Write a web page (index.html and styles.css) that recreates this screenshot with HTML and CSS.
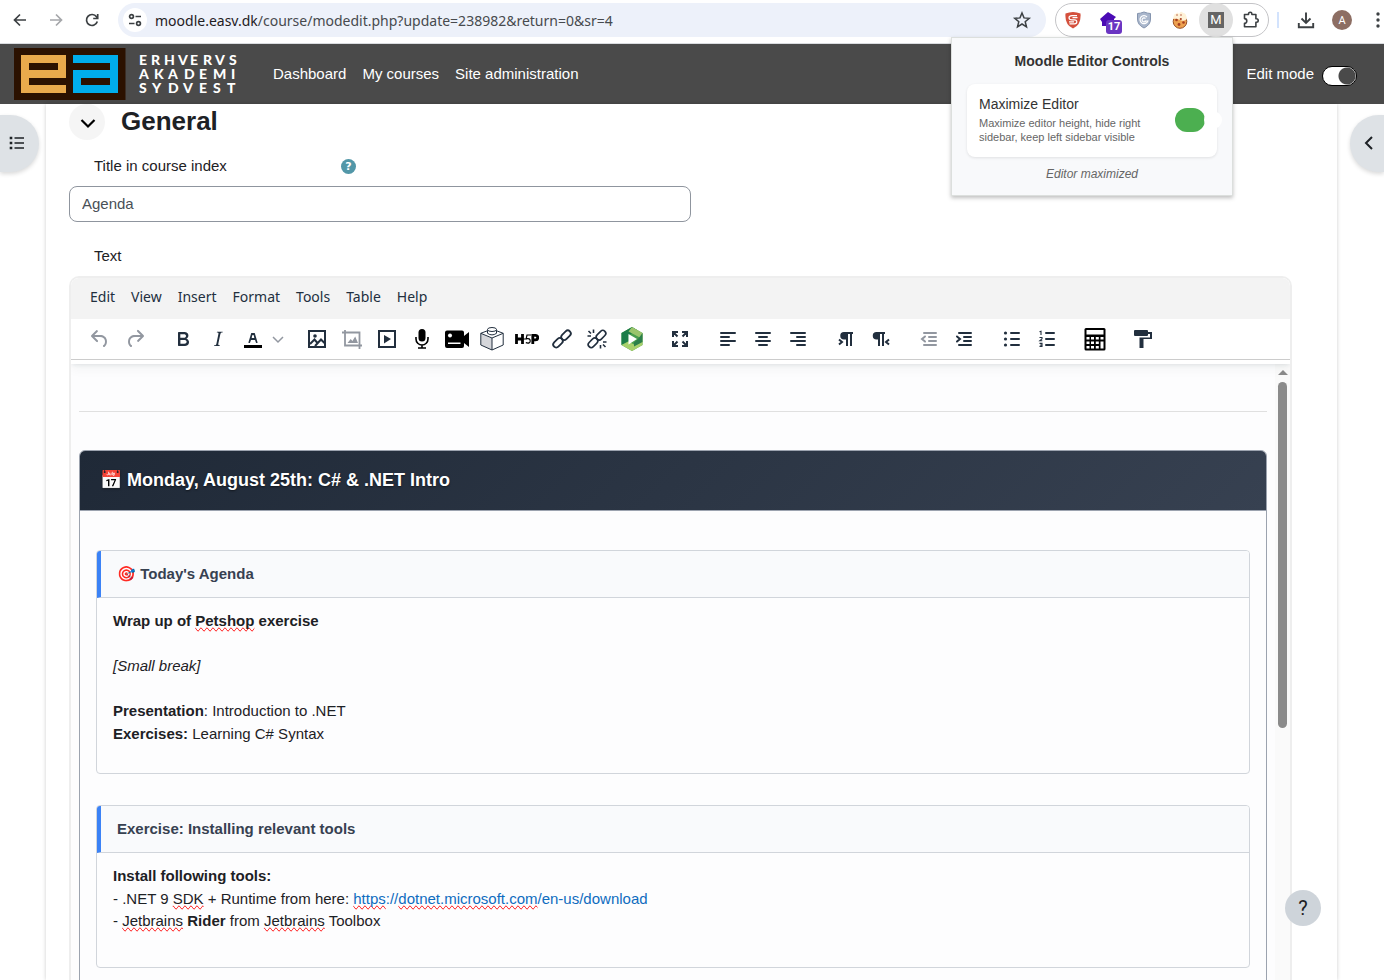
FILE: index.html
```
<!DOCTYPE html>
<html lang="en">
<head>
<meta charset="utf-8">
<title>Edit Text and media area</title>
<link rel="stylesheet" href="styles.css">
</head>
<body>
<header class="browser">
  <button class="tool" aria-label="Back"><svg width="20" height="20" viewBox="0 0 20 20" class="line"><path d="M16 10H4.500M10 4.500 4.500 10 10 15.500"/></svg></button>
  <button class="tool muted" aria-label="Forward"><svg width="20" height="20" viewBox="0 0 20 20" class="line"><path d="M4 10h11.500M10 4.500 15.500 10 10 15.500"/></svg></button>
  <button class="tool" aria-label="Reload"><svg width="20" height="20" viewBox="0 0 20 20" class="line"><path d="M15.300 11.500A5.500 5.500 0 1 1 14.500 6.800L15.500 8M15.700 4v4.500h-4.500"/></svg></button>
  <div class="address">
    <button class="site-info" aria-label="Site information"><svg width="16" height="16" viewBox="0 0 16 16" class="line"><circle cx="4.500" cy="4.500" r="1.900"/><path d="M8.500 4.500H14M2 11.500h5.500"/><circle cx="11.500" cy="11.500" r="1.900"/></svg></button>
    <span class="url"><span class="host">moodle.easv.dk</span>/course/modedit.php?update=238982&amp;return=0&amp;sr=4</span>
    <button class="tool star" aria-label="Bookmark"><svg width="20" height="20" viewBox="0 0 20 20"><path d="m10 3 2 4.900 5.200.4-4 3.400 1.300 5.100-4.500-2.800-4.500 2.800 1.300-5.100-4-3.400 5.200-.4z" fill="none" stroke="currentColor" stroke-width="1.500"/></svg></button>
  </div>
  <div class="extensions">
    <button class="ext" aria-label="Shield S"><svg width="18" height="18" viewBox="0 0 18 18"><path d="M1.500 2.500Q9-.5 16.500 2.500 17.500 14 9 17.500.500 14 1.500 2.500Z" fill="#d4503c"/><path d="M13 4.600H8Q5 4.600 5 6.700T8 8.800h2.500q2.300 0 2.300 2t-2.300 2H5.500M13.500 6.700H8.500M5 10.800h5" fill="none" stroke="#fff" stroke-width="1.200"/></svg></button>
    <button class="ext" aria-label="Purple extension"><svg width="24" height="24" viewBox="0 0 24 24"><path d="m12 4 8 5-2 2v7H6v-4l-2-3z" fill="#4b0bb5"/></svg><span class="count">17</span></button>
    <button class="ext" aria-label="Privacy shield"><svg width="18" height="18" viewBox="0 0 18 18"><path d="M9 1q4 1.500 6.500 1.500V8q0 6-6.500 9Q2.500 14 2.500 8V2.500Q5 2.500 9 1Z" fill="#a9b6cb" stroke="#8494ae"/><path d="M12 6a4 4 0 1 0 .8 4H9.500M10.500 7.500a2 2 0 1 0 .5 2" fill="none" stroke="#fff" stroke-width="1.200"/></svg></button>
    <button class="ext" aria-label="Cookies"><svg width="18" height="18" viewBox="0 0 18 18"><circle cx="9" cy="10.500" r="6.800" fill="#eda14f" stroke="#9a4f22"/><path d="M2 8q1-6 3-5 1-3 3 0 2-4 4-1 3-1 4 6-3 3-7 1T2 8Z" fill="#fff2d8"/><g fill="#a63c20"><circle cx="5.500" cy="9" r="1.300"/><circle cx="9.800" cy="8" r="1.100"/><circle cx="12.500" cy="11.500" r="1.300"/><circle cx="8" cy="13.500" r="1.400"/><circle cx="6" cy="4" r=".7"/><circle cx="10" cy="4" r=".7"/></g></svg></button>
    <button class="ext active" aria-label="Moodle Editor Controls"><span class="letter">M</span></button>
    <button class="ext" aria-label="Extensions"><svg width="20" height="20" viewBox="0 0 20 20"><path d="M3.500 4.500h4V4a1.700 1.700 0 0 1 3.400 0v.5h4v4.300h.6a1.700 1.700 0 0 1 0 3.400h-.6v4.600H3.500v-3.600a2.200 2.200 0 0 0 0-4.600Z" fill="none" stroke="currentColor" stroke-width="1.600" stroke-linejoin="round"/></svg></button>
  </div>
  <span class="divider"></span>
  <button class="tool download" aria-label="Downloads"><svg width="20" height="20" viewBox="0 0 20 20"><path d="M10 2.500v10M5.500 8.500l4.500 4.500 4.500-4.500M2.800 13v4.200h14.400V13" fill="none" stroke="currentColor" stroke-width="1.900"/></svg></button>
  <button class="avatar" aria-label="Profile">A</button>
  <button class="tool more" aria-label="Menu"><svg width="4" height="18" viewBox="0 0 4 18" fill="currentColor"><circle cx="2" cy="3" r="1.700"/><circle cx="2" cy="9" r="1.700"/><circle cx="2" cy="15" r="1.700"/></svg></button>
</header>

<nav class="navbar">
  <a class="brand" href="#" aria-label="Erhvervsakademi Sydvest">
    <svg width="226" height="52" viewBox="0 0 226 52">
      <path d="M0 0h111.500v52H0z" fill="#2b1100"/>
      <path fill="#e9aa4c" fill-rule="evenodd" d="M7 7h45v23H15v7h37v8H7ZM15 15v7h29v-7Z"/>
      <path fill="#00adeb" fill-rule="evenodd" d="M59 7h45v38H59V22h37v-7H59ZM67 30v7h29v-7Z"/>
      <g class="wordmark">
        <text y="17" x="125 137 150 164 176 189 201 215">ERHVERVS</text>
        <text y="31" x="125 140 154 170 185 199 217">AKADEMI</text>
        <text y="45" x="125 138 154 169 185 199 213">SYDVEST</text>
      </g>
    </svg>
  </a>
  <a href="#">Dashboard</a>
  <a href="#">My courses</a>
  <a href="#">Site administration</a>
  <label class="edit-mode">Edit mode <input type="checkbox" role="switch" checked></label>
</nav>

<main class="page">
  <form class="sheet">
    <div class="section-title">
      <button type="button" class="collapse" aria-label="Collapse General"><svg width="16" height="16" viewBox="0 0 16 16"><path d="m1.500 5 6.500 6.500L14.500 5" fill="none" stroke="#000" stroke-width="2.200"/></svg></button>
      <h2>General</h2>
    </div>
    <div class="field-label">
      <label for="title">Title in course index</label>
      <button type="button" class="hint" aria-label="Help with title">?</button>
    </div>
    <input class="text-input" id="title" type="text" value="Agenda">
    <div class="field-label text-label"><span>Text</span></div>

    <section class="editor" aria-label="Text">
      <div class="editor-head">
        <div class="menubar">
          <button type="button">Edit</button><button type="button">View</button><button type="button">Insert</button><button type="button">Format</button><button type="button">Tools</button><button type="button">Table</button><button type="button">Help</button>
        </div>
        <div class="toolbar">
          <div class="group">
            <button type="button" class="off" aria-label="Undo"><svg viewBox="0 0 24 24"><path d="M6.400 8H12c3.700 0 6.200 2 6.800 5.100.6 2.700-.4 5.600-2.300 6.800a1 1 0 0 1-1-1.800c1.100-.6 1.800-2.700 1.400-4.600-.5-2.100-2.100-3.500-4.900-3.500H6.400l3.300 3.300a1 1 0 1 1-1.400 1.400l-5-5a1 1 0 0 1 0-1.400l5-5a1 1 0 0 1 1.400 1.400L6.400 8Z"/></svg></button>
            <button type="button" class="off" aria-label="Redo"><svg viewBox="0 0 24 24"><path d="M17.600 10H12c-2.800 0-4.400 1.400-4.900 3.500-.4 2 .3 4 1.400 4.600a1 1 0 1 1-1 1.800c-2-1.200-2.900-4.100-2.300-6.800.6-3 3-5.100 6.800-5.100h5.600l-3.300-3.300a1 1 0 1 1 1.400-1.400l5 5a1 1 0 0 1 0 1.400l-5 5a1 1 0 0 1-1.400-1.400l3.300-3.300Z"/></svg></button>
          </div>
          <div class="group">
            <button type="button" aria-label="Bold"><svg viewBox="0 0 24 24"><path d="M7.800 19c-.3 0-.5 0-.6-.2l-.2-.5V5.700c0-.2 0-.4.2-.5l.6-.2h5c1.500 0 2.700.3 3.500 1 .7.6 1.100 1.400 1.100 2.500a3 3 0 0 1-.6 1.900c-.4.6-1 1-1.600 1.200.4.100.9.3 1.300.6s.8.700 1 1.200c.4.4.5 1 .5 1.600 0 1.300-.4 2.300-1.300 3-.8.700-2.100 1-3.800 1H7.800Zm5-8.300c.6 0 1.200-.1 1.600-.5.4-.3.600-.7.600-1.300 0-1.100-.8-1.700-2.300-1.700H9.300v3.500h3.400Zm.5 6c.7 0 1.300-.1 1.700-.4.4-.4.600-.9.600-1.500s-.2-1-.7-1.400c-.4-.3-1-.4-2-.4H9.400v3.800h4Z"/></svg></button>
            <button type="button" aria-label="Italic"><svg viewBox="0 0 24 24"><path d="m16.700 4.700-.1.900h-.3c-.6 0-1 0-1.400.3-.3.300-.4.600-.5 1.100l-2.100 9.800v.6c0 .5.400.8 1.400.8h.2l-.2.800H8l.2-.8h.2c1.100 0 1.800-.5 2-1.500l2-9.800.1-.5c0-.6-.4-.8-1.400-.8h-.3l.2-.9h5.800Z"/></svg></button>
            <button type="button" aria-label="Text color"><svg viewBox="0 0 24 24"><path d="M3 18h18v3H3z" fill="#000"/><path d="M8.700 16h-.8a.5.500 0 0 1-.5-.6l2.700-9c.1-.3.300-.4.500-.4h2.800c.2 0 .4.100.5.400l2.700 9a.5.500 0 0 1-.5.600h-.8a.5.500 0 0 1-.4-.4l-.7-2.200c0-.3-.3-.4-.5-.4h-3.400c-.2 0-.4.100-.5.400l-.7 2.200c0 .3-.2.400-.4.400Zm2.600-7.600-.6 2a.5.500 0 0 0 .5.600h1.600a.5.500 0 0 0 .5-.6l-.6-2c0-.3-.3-.4-.5-.4h-.4c-.2 0-.4.100-.5.400Z"/></svg></button>
            <button type="button" class="narrow off" aria-label="Text color menu"><svg class="small" viewBox="0 0 12 12"><path class="s" d="m1 4 5 5 5-5" stroke-width="1.500"/></svg></button>
          </div>
          <div class="group">
            <button type="button" aria-label="Image"><svg viewBox="0 0 24 24"><path class="s" d="M4 4h16v16H4Z M5 17l4.500-4.500 3 3.500M10 19l6-6.500 4 4" stroke-width="2"/><circle cx="10" cy="9" r="1.800"/></svg></button>
            <button type="button" class="off" aria-label="Crop image"><svg viewBox="0 0 24 24"><path class="s" d="M5 3v15.500h17M2 5.500h17.500V22" stroke-width="1.800"/><path d="m7.500 16 3.200-4 1.700 2 2.800-4.500 2.800 6.500Z"/></svg></button>
            <button type="button" aria-label="Media"><svg viewBox="0 0 24 24"><path class="s" d="M4 4h16v16H4Z" stroke-width="2"/><path d="m9 8 7 4-7 4.500Z"/></svg></button>
            <button type="button" class="black" aria-label="Record audio"><svg viewBox="0 0 24 24"><rect x="8.500" y="2" width="7" height="12.500" rx="3.500"/><path class="s" d="M6 10v2a6 6 0 0 0 12 0v-2M12 18v2.500M8 21h8" stroke-width="1.600"/></svg></button>
            <button type="button" class="black" aria-label="Record video"><svg viewBox="0 0 24 24"><path d="M2 3.500h15a2 2 0 0 1 2 2V9l5-4v15l-5-4v3a2 2 0 0 1-2 2H2a2 2 0 0 1-2-2v-13.500a2 2 0 0 1 2-2Z"/><circle cx="5" cy="8.500" r="2" fill="#fff"/><path d="M3 15.500h12.500V17H3z" fill="#fff"/></svg></button>
            <button type="button" aria-label="Add content"><svg viewBox="0 0 24 24"><path d="m.8 6.500 11.200 4.700V23L.8 18Z" fill="#d5d6da"/><path class="s" d="M.8 6.300 12 2l11.200 4.300V18L12 23 .8 18ZM.8 6.300 12 11l11.200-4.700M12 11v12" stroke-width="1"/><path d="M7.500 2.500v3.800q4.500 3.200 9 0V2.500" fill="#fff" stroke="currentColor"/><ellipse cx="12" cy="2.500" rx="4.500" ry="2" fill="#fff" stroke="currentColor"/></svg></button>
            <button type="button" class="black" aria-label="H5P"><svg viewBox="0 0 24 24"><path class="s" d="M1.500 7v10M7.500 7v10M1.500 12h6" stroke-width="2.800"/><path class="s" d="M17.800 17V8.400h2.700a2.200 2.200 0 0 1 0 4.400h-2" stroke-width="2.800"/><path class="s" d="M16 8h-4l-.8 3.700q4-.8 4 2.200 0 3-4.400 1.800M7 12h5" stroke-width="1.200"/></svg></button>
            <button type="button" aria-label="Link"><svg viewBox="0 0 24 24"><g class="s" stroke-width="1.800"><rect x="10.500" y="5.200" width="11" height="6" rx="3" transform="rotate(-45 16 8.200)"/><rect x="2.500" y="12.800" width="11" height="6" rx="3" transform="rotate(-45 8 15.800)"/></g></svg></button>
            <button type="button" aria-label="Remove link"><svg viewBox="0 0 24 24"><g class="s" stroke-width="1.600"><rect x="10.500" y="5.200" width="11" height="6" rx="3" transform="rotate(-45 16 8.200)"/><rect x="2.500" y="12.800" width="11" height="6" rx="3" transform="rotate(-45 8 15.800)"/><path d="M8.500 2.500v3.500M3.500 4l2.500 2.500M2.500 9H6M15.500 18v3.500M18 17.500l2.500 2.500M18 15h3.500"/></g></svg></button>
            <button type="button" aria-label="Panopto"><svg viewBox="0 0 24 24"><path d="m12 0 10.500 6v12L12 24 1.500 18V6Z" fill="#499d4d"/><path d="M12 0 1.500 6v12l7-4V8.500L17 3Z" fill="#1c7c48"/><path d="m12 0 10.500 6v6L17 9 8.500 4.500Z" fill="#9ac46b"/><path d="m1.500 18 7-3.500 5.500 3 8.500-5V18L12 24Z" fill="#a8d06c"/><path d="M22.500 6v9L14 19.500v-4L18 12Z" fill="#2c7f4b"/><path d="m8.500 7 8.500 5-8.500 5.500Z" fill="#fff"/></svg></button>
          </div>
          <div class="group">
            <button type="button" aria-label="Fullscreen"><svg viewBox="0 0 24 24"><path class="s" d="M5 10V5h5M14 5h5v5M19 14v5h-5M10 19H5v-5M5 5l4.500 4.500M19 5l-4.500 4.500M19 19l-4.500-4.500M5 19l4.500-4.500" stroke-width="2"/></svg></button>
          </div>
          <div class="group">
            <button type="button" aria-label="Align left"><svg viewBox="0 0 24 24"><path class="s r" d="M5 6h14M5 10h8M5 14h14M5 18h8"/></svg></button>
            <button type="button" aria-label="Align center"><svg viewBox="0 0 24 24"><path class="s r" d="M5 6h14M8 10h8M5 14h14M8 18h8"/></svg></button>
            <button type="button" aria-label="Align right"><svg viewBox="0 0 24 24"><path class="s r" d="M5 6h14M11 10h8M5 14h14M11 18h8"/></svg></button>
          </div>
          <div class="group">
            <button type="button" aria-label="Left to right"><svg viewBox="0 0 24 24"><path d="M10 5h9v2h-1v12h-2V7h-2v12h-2v-6.500h-2a3.750 3.750 0 0 1 0-7.500Z"/><path class="s" d="m5 12.500 3 2.500-3 2.500" stroke-width="2"/></svg></button>
            <button type="button" aria-label="Right to left"><svg viewBox="0 0 24 24"><path d="M7.500 5H16v2h-1v12h-2V7h-2v12H9v-6.500H7.500a3.750 3.750 0 0 1 0-7.500Z"/><path class="s" d="m20 12.500-3 2.500 3 2.500" stroke-width="2"/></svg></button>
          </div>
          <div class="group">
            <button type="button" class="off" aria-label="Decrease indent"><svg viewBox="0 0 24 24"><path class="s r" d="M7 6h12M12 10h7M12 14h7M7 18h12M8 9.500 5 12l3 2.500"/></svg></button>
            <button type="button" aria-label="Increase indent"><svg viewBox="0 0 24 24"><path class="s r" d="M7 6h12M12 10h7M12 14h7M7 18h12M5 9.500 8 12l-3 2.500"/></svg></button>
          </div>
          <div class="group">
            <button type="button" aria-label="Bullet list"><svg viewBox="0 0 24 24"><path class="s r" d="M11 6h8M11 12h8M11 18h8"/><circle cx="5.500" cy="6" r="1.600"/><circle cx="5.500" cy="12" r="1.600"/><circle cx="5.500" cy="18" r="1.600"/></svg></button>
            <button type="button" aria-label="Numbered list"><svg viewBox="0 0 24 24"><path class="s r" d="M11 6h8M11 12h8M11 18h8"/><path class="s" d="M4.500 4.700 6 4.200V8M4.500 10.500H7v1.300l-2.200 2H7.300M4.500 16.400H7v3H4.500M5.200 18H7" stroke-width="1.100"/></svg></button>
          </div>
          <div class="group">
            <button type="button" class="black" aria-label="Equation editor"><svg viewBox="0 0 24 24"><rect x="1.500" y="1" width="21" height="22.500" rx="1.500"/><path fill="#fff" d="M3.500 3h17v4.500h-17zM3.500 10h3v2.500h-3zM8 10h3v2.500H8zM12.800 10h3v2.500h-3zM17.500 10h3v2.500h-3zM3.500 14.500h3V17h-3zM8 14.500h3V17H8zM12.800 14.500h3V17h-3zM17.500 14.500h3v7h-3zM3.500 19h3v2.500h-3zM8 19h3v2.500H8zM12.800 19h3v2.500h-3z"/></svg></button>
          </div>
          <div class="group">
            <button type="button" aria-label="Format painter"><svg viewBox="0 0 24 24"><path d="M4 3h12a1 1 0 0 1 1 1v1h4v7h-8.500v9h-4V10.500H19V7h-2v1a1 1 0 0 1-1 1H4a1 1 0 0 1-1-1V4a1 1 0 0 1 1-1Z"/></svg></button>
          </div>
        </div>
      </div>
      <div class="editor-body">
        <div class="document">
          <hr>
          <article class="day">
            <h3>📅 Monday, August 25th: C# &amp; .NET Intro</h3>
            <div class="day-body">
              <section class="card">
                <h4>🎯 Today's Agenda</h4>
                <p><b>Wrap up of <span class="typo">Petshop</span> exercise</b><br><br><i>[Small break]</i><br><br><b>Presentation</b>: Introduction to .NET<br><b>Exercises:</b> Learning C# Syntax</p>
              </section>
              <section class="card">
                <h4>Exercise: Installing relevant tools</h4>
                <p class="tall"><b>Install following tools:</b><br>- .NET 9 <span class="typo">SDK</span> + Runtime from here: <a href="#"><span class="typo">https</span>://<span class="typo">dotnet.microsoft.com</span>/en-us/download</a><br>- <span class="typo">Jetbrains</span> <b>Rider</b> from <span class="typo">Jetbrains</span> Toolbox</p>
              </section>
            </div>
          </article>
        </div>
        <div class="scrollbar"><span class="arrow"></span><span class="thumb"></span></div>
      </div>
    </section>
  </form>
  <button class="drawer left" aria-label="Open course index"><svg width="16" height="14" viewBox="0 0 16 14"><path d="M5.500 2H15M5.500 7H15M5.500 12H15" stroke="#1d2125" stroke-width="1.600"/><path d="M.7.700h2.600v2.600H.7zM.7 5.700h2.600v2.600H.7zM.7 10.700h2.600v2.600H.7z" fill="#1d2125"/></svg></button>
  <button class="drawer right" aria-label="Open block drawer"><svg width="10" height="14" viewBox="0 0 10 14"><path d="M8 1 2 7l6 6" fill="none" stroke="#1d2125" stroke-width="2"/></svg></button>
  <button class="page-help" aria-label="Help">?</button>
</main>

<aside class="popup">
  <h1>Moodle Editor Controls</h1>
  <div class="option">
    <label for="maximize"><span class="option-name">Maximize Editor</span><span class="option-text">Maximize editor height, hide right sidebar, keep left sidebar visible</span></label>
    <input id="maximize" class="switch" type="checkbox" role="switch" checked>
  </div>
  <p class="status">Editor maximized</p>
</aside>
</body>
</html>
```
FILE: styles.css
```
* { box-sizing: border-box; }

body {
  margin: 0;
  height: 100vh;
  display: flex;
  flex-direction: column;
  overflow: hidden;
  position: relative;
  background: #fff;
  color: #1d2125;
  font: 15px/1.5 "Liberation Sans", Arial, sans-serif;
}

button {
  border: 0;
  padding: 0;
  background: none;
  color: inherit;
  font: inherit;
  display: flex;
  align-items: center;
  justify-content: center;
}

h1, h2, h3, h4, p { margin: 0; }

/* Browser toolbar */
.browser {
  flex: none;
  height: 44px;
  padding: 3px 4px 6px 10px;
  display: flex;
  align-items: center;
  color: #3c4043;
  border-bottom: 1px solid #dadce0;
  font-family: "Noto Sans", sans-serif;
}
.tool { width: 20px; height: 20px; margin-right: 16px; }
.muted { color: #a5a7aa; }
.line { fill: none; stroke: currentColor; stroke-width: 1.700; }
.address {
  flex: 1;
  height: 34px;
  margin-right: 9px;
  padding: 0 14px 0 5px;
  display: flex;
  align-items: center;
  border-radius: 17px;
  background: #edf1fa;
}
.site-info { width: 24px; height: 24px; margin-right: 8px; border-radius: 50%; background: #fff; }
.url { flex: 1; font-size: 14px; color: #474a4e; }
.host { color: #1f2023; }
.star { margin: 0; }
.extensions {
  height: 34px;
  display: flex;
  align-items: center;
  border: 1px solid #c4c4c7;
  border-radius: 17px;
}
.ext { position: relative; width: 36px; height: 32px; }
.ext:first-child, .ext:last-child { width: 34px; }
.ext.active { width: 34px; height: 34px; margin: 0 1px; background: #e0e0e0; border-radius: 50%; }
.letter { width: 16px; background: #656565; color: #fff; font: 13px/16px Roboto, sans-serif; }
.count { position: absolute; right: 4px; bottom: 2px; width: 16px; border-radius: 3px; background: #6a35c2; font: bold 11px/14px Roboto, sans-serif; color: #fff; }
.divider { width: 2px; height: 16px; margin: 0 17px 0 8px; background: #d3e3fd; }
.avatar { width: 20px; height: 20px; margin-right: 24px; border-radius: 50%; background: #8d6e63; color: #fff; font: 11px Roboto, sans-serif; }
.more { width: 4px; margin: 0; }

/* Site navigation */
.navbar {
  flex: none;
  height: 60px;
  padding: 0 27px 0 14px;
  display: flex;
  align-items: center;
  gap: 16px;
  background: #4a4a4a;
  color: #fff;
}
.navbar a { color: #fff; text-decoration: none; }
.navbar .brand { height: 52px; margin-right: 17px; }
.wordmark { font: 900 14px Lato, sans-serif; fill: #fff; }
.edit-mode { margin-left: auto; display: flex; align-items: center; gap: 8px; }
.edit-mode input {
  appearance: none;
  width: 35px;
  height: 20px;
  margin: 3px 0 0;
  border: 1px solid #000;
  border-radius: 10px;
  background: radial-gradient(circle at 24px 9px, #4a4a4a 8px, #fff 9px);
}

/* Form page */
.page { flex: 1; min-height: 0; position: relative; padding: 0 47px 0 46px; display: flex; }
.sheet {
  flex: 1;
  min-width: 0;
  padding: 0 45px 0 23px;
  display: flex;
  flex-direction: column;
  box-shadow: 0 0 4px rgba(0, 0, 0, .2);
}
.section-title { display: flex; align-items: center; gap: 16px; height: 36px; }
.section-title h2 { font-size: 26px; line-height: 34px; margin-top: -2px; }
.collapse { width: 36px; height: 36px; border-radius: 50%; background: #f5f5f5; padding: 2px 0 0 2px; }
.field-label { display: flex; align-items: center; width: 262px; margin-left: 25px; padding: 15px 0 8px; justify-content: space-between; }
.hint { width: 15px; height: 15px; border-radius: 50%; background: #5297a8; color: #fff; font: bold 11px "DejaVu Sans", sans-serif; }
.text-input {
  width: calc(50% + 10px);
  height: 36px;
  padding: 0 12px;
  border: 1px solid #8f959e;
  border-radius: 8px;
  color: #495057;
  font: inherit;
  background: #fff;
}
.text-label { padding: 23px 0 9px; }

/* Editor */
.editor {
  flex: 1;
  min-height: 0;
  display: flex;
  flex-direction: column;
  border: 2px solid #eee;
  border-bottom: 0;
  border-radius: 10px 10px 0 0;
  overflow: hidden;
}
.editor-head { flex: none; padding-bottom: 4px; background: #fff; box-shadow: 0 2px 4px -1px rgba(34, 47, 62, .1), 0 6px 10px rgba(34, 47, 62, .04); z-index: 1; }
.menubar { height: 41px; padding: 0 11px 3px; display: flex; align-items: center; background: #f3f3f3; color: #222f3e; font: 14px/20px "Noto Sans", sans-serif; }
.menubar button { padding: 0 8px; }
.toolbar { height: 41px; padding-left: 11px; display: flex; align-items: center; gap: 13px; border-bottom: 1px solid #ccc; color: #222f3e; }
.group { display: flex; }
.group button { width: 35px; height: 34px; }
.group .narrow { width: 16px; }
.group svg { width: 24px; height: 24px; fill: currentColor; }
.group .small { width: 12px; height: 12px; }
.group .off { color: #9297a0; }
.group .black { color: #000; }
.group .s { fill: none; stroke: currentColor; }
.group .r { stroke-width: 2; stroke-linecap: round; }
.editor-body { flex: 1; min-height: 0; display: flex; background: #fff; }
.document { flex: 1; min-width: 0; padding: 47px 8px 0; background: #fdfdfe; }
.document hr { margin: 0 0 38px; border: 0; border-top: 1px solid #e0e0e0; }
.day { border: 1px solid #9ca3af; border-radius: 6px; overflow: hidden; min-height: 600px; }
.day h3 {
  padding: 16px 20px;
  border-bottom: 1px solid #9ca3af;
  background: linear-gradient(135deg, #1f2937, #374151);
  color: #fff;
  font-size: 18px;
  line-height: 27px;
  text-shadow: 0 1px 2px rgba(0, 0, 0, .5);
}
.day-body { padding: 39px 16px; display: flex; flex-direction: column; gap: 31px; }
.card { border: 1px solid #d1d5db; border-radius: 4px; overflow: hidden; }
.card h4 {
  padding: 12px 16px;
  border-left: 4px solid #3b82f6;
  border-bottom: 1px solid #d1d5db;
  background: #f9fafc;
  color: #374151;
  font-size: 15px;
  line-height: 22px;
}
.card p { padding: 12px 16px 28px; }
.card .tall { padding-bottom: 34px; }
.card a { color: #0f6cbf; text-decoration: none; }
.typo { text-decoration-line: spelling-error; }
.scrollbar { flex: none; width: 15px; padding-top: 6px; display: flex; flex-direction: column; align-items: center; gap: 7px; background: #fafafa; }
.arrow { border: 5px solid transparent; border-top: 0; border-bottom-color: #8b8b8b; }
.thumb { width: 9px; height: 346px; border-radius: 5px; background: #8b8b8b; }

/* Floating controls */
.drawer { position: absolute; top: 11px; height: 57px; background: #dee2e6; box-shadow: 0 2px 4px rgba(0, 0, 0, .15); }
.drawer.left { left: 0; width: 39px; border-radius: 0 29px 29px 0; padding: 0 6px 2px 0; }
.drawer.right { right: 0; width: 34px; border-radius: 29px 0 0 29px; padding: 0 0 2px 3px; }
.page-help { position: absolute; right: 63px; bottom: 54px; width: 36px; height: 36px; border-radius: 50%; background: #ced4da; font: 20px Roboto, sans-serif; }

/* Extension popup */
.popup {
  position: absolute;
  top: 37px;
  right: 151px;
  width: 282px;
  padding: 13px 15px 12px;
  border: 1px solid #dcdfdd;
  background: #f8f9fb;
  color: #333;
  box-shadow: 0 2px 4px rgba(0, 0, 0, .25);
  z-index: 2;
}
.popup h1 { font-size: 14px; line-height: 20px; text-align: center; margin-bottom: 13px; }
.option { display: flex; align-items: center; justify-content: space-between; padding: 12px 12px 13px; border-radius: 8px; background: #fff; box-shadow: 0 1px 3px rgba(0, 0, 0, .1); }
.option label { width: 180px; }
.option-name { display: block; font-size: 14px; line-height: 16px; margin-bottom: 4px; }
.option-text { display: block; font-size: 11px; line-height: 14px; color: #666; }
.switch { appearance: none; position: relative; width: 30px; height: 24px; margin: 0; border-radius: 12px; background: #4caf50; }
.switch::after { content: ""; position: absolute; left: 29px; top: 3px; width: 18px; height: 18px; border-radius: 50%; background: #fff; }
.status { margin-top: 8px; font-size: 12px; line-height: 18px; font-style: italic; text-align: center; color: #666; }
```
